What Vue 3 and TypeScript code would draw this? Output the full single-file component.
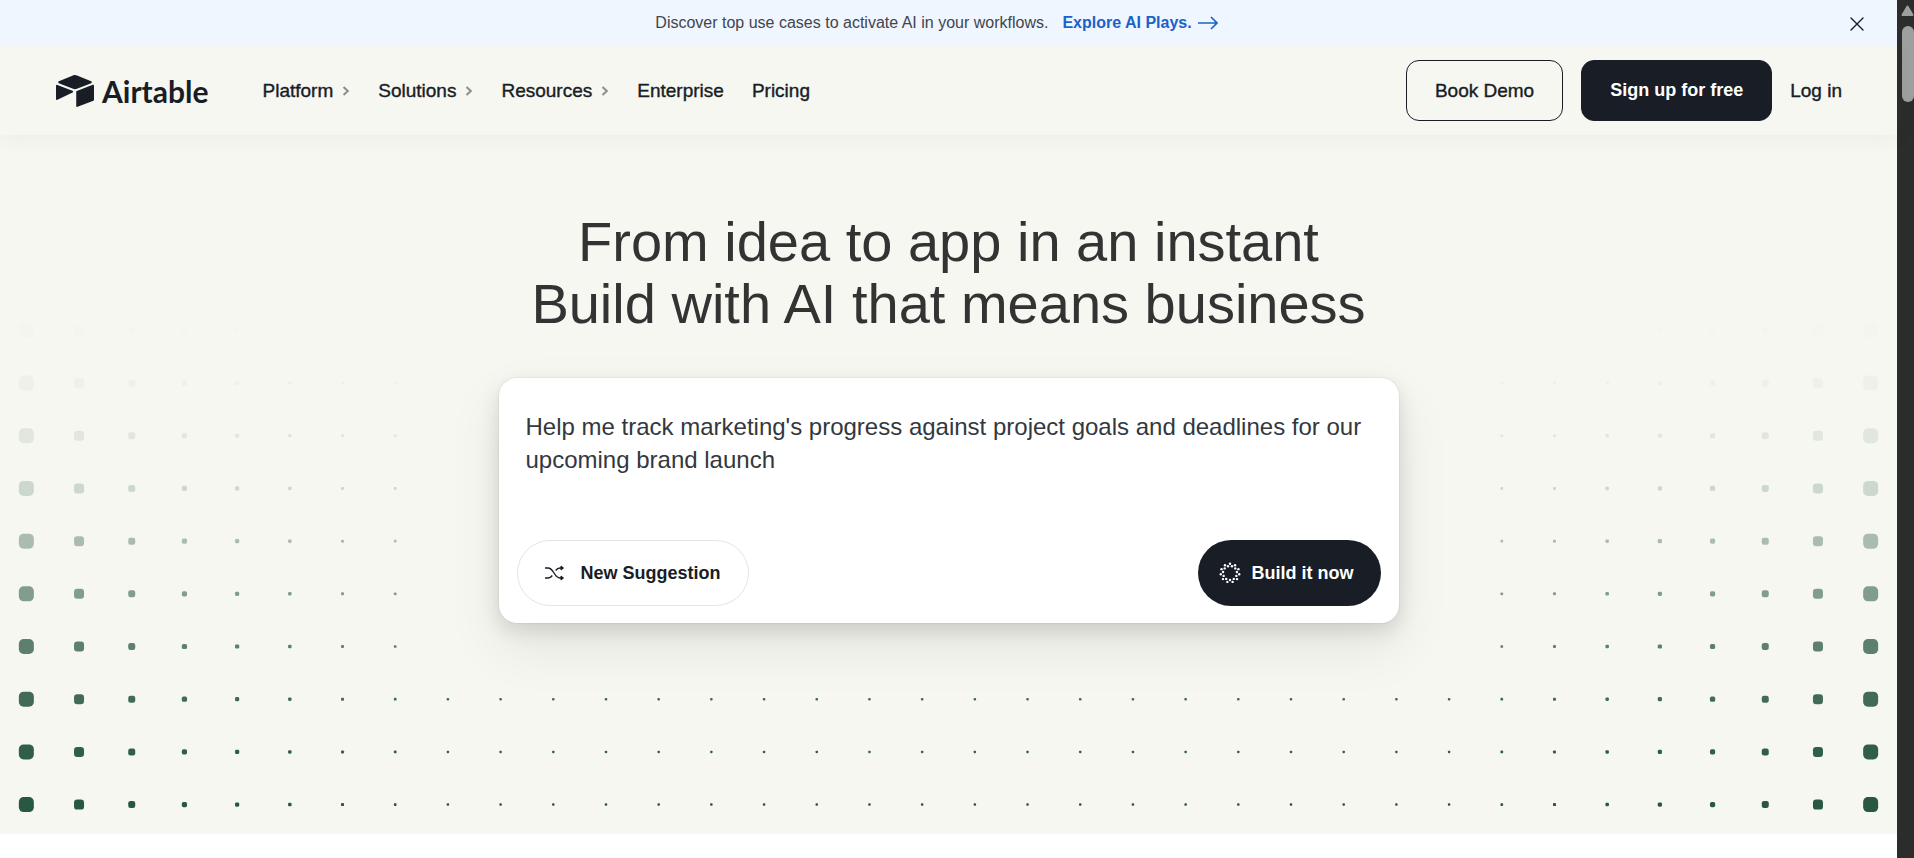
<script setup lang="ts">
import { ref } from 'vue'

interface Dot {
  key: string
  x: number
  y: number
  size: number
  opacity: number
}

const menus: string[] = ['Platform', 'Solutions', 'Resources']
const links: string[] = ['Enterprise', 'Pricing']

const prompt = ref(
  "Help me track marketing's progress against project goals and deadlines for our upcoming brand launch"
)
const bannerOpen = ref(true)

const COLUMNS = 36
const SIDE_COLUMNS = 8
const WIDTH = 1897
const STEP = WIDTH / COLUMNS
const sizes: number[] = [15, 10, 7, 5.2, 4.2, 3.5, 3, 2.7]
const opacities: number[] = [0.01, 0.04, 0.1, 0.2, 0.37, 0.57, 0.75, 0.88, 0.96, 1]

const dots: Dot[] = []
opacities.forEach((opacity, row) => {
  for (let col = 0; col < COLUMNS; col++) {
    const edge = Math.min(col, COLUMNS - 1 - col)
    if (row < 7 && edge >= SIDE_COLUMNS) continue
    const size = sizes[edge] ?? 2.5
    dots.push({
      key: `${row}-${col}`,
      x: (col + 0.5) * STEP - size / 2,
      y: (row + 0.5) * STEP - size / 2,
      size,
      opacity
    })
  }
})

const ringDots = Array.from({ length: 22 }, (_, i) => {
  const angle = (i * Math.PI) / 11
  const radius = i % 2 === 0 ? 9.3 : 7
  return { x: 11 + radius * Math.sin(angle), y: 11 - radius * Math.cos(angle) }
})
</script>

<template>
  <div class="window">
    <div class="page">
      <div v-if="bannerOpen" class="banner">
        <p class="banner-text">
          Discover top use cases to activate AI in your workflows.
          <a href="#plays" class="banner-link">
            Explore AI Plays.
            <svg width="20" height="14" viewBox="0 0 20 14" aria-hidden="true">
              <path d="M0 7H19M13 1L19 7L13 13" fill="none" stroke="currentColor" stroke-width="1.6" />
            </svg>
          </a>
        </p>
        <button class="close" type="button" aria-label="Dismiss" @click="bannerOpen = false">
          <svg width="14" height="14" viewBox="0 0 14 14" aria-hidden="true">
            <path d="M1 1L13 13M13 1L1 13" fill="none" stroke="currentColor" stroke-width="1.4" stroke-linecap="round" />
          </svg>
        </button>
      </div>

      <header class="header">
        <a href="#home" class="logo">
          <svg width="38" height="38" viewBox="0 0 24 24" fill="currentColor" aria-hidden="true">
            <path d="M11.992 1.966c-.434 0-.87.086-1.28.257L1.779 5.917c-.503.208-.49.908.012 1.116l8.982 3.558a3.266 3.266 0 0 0 2.454 0l8.982-3.558c.503-.196.503-.908.012-1.116l-8.957-3.694a3.255 3.255 0 0 0-1.272-.257zM23.4 8.056a.589.589 0 0 0-.222.045l-10.012 3.877a.612.612 0 0 0-.38.564v8.896a.6.6 0 0 0 .821.552L23.62 18.1a.583.583 0 0 0 .38-.551V8.653a.6.6 0 0 0-.6-.596zM.676 8.095a.644.644 0 0 0-.48.19C.086 8.396 0 8.53 0 8.69v8.355c0 .442.515.737.908.54l6.27-3.006.307-.147 2.969-1.436c.466-.22.43-.908-.061-1.092L.883 8.138a.57.57 0 0 0-.207-.044z" />
          </svg>
          <span class="wordmark">Airtable</span>
        </a>
        <nav class="nav">
          <button v-for="menu in menus" :key="menu" type="button" class="nav-item">
            {{ menu }}
            <svg width="8" height="10" viewBox="0 0 8 10" aria-hidden="true">
              <path d="M1.5 1L5.8 5L1.5 9" fill="none" stroke="#8f908e" stroke-width="2.1" />
            </svg>
          </button>
          <a v-for="link in links" :key="link" :href="'#' + link" class="nav-item">{{ link }}</a>
        </nav>
        <div class="actions">
          <a href="#demo" class="action outline">Book Demo</a>
          <a href="#signup" class="action solid">Sign up for free</a>
          <a href="#login" class="login">Log in</a>
        </div>
      </header>

      <main class="hero">
        <svg class="dots" viewBox="0 0 1897 527" aria-hidden="true">
          <rect
            v-for="dot in dots"
            :key="dot.key"
            :x="dot.x"
            :y="dot.y"
            :width="dot.size"
            :height="dot.size"
            :rx="dot.size * 0.32"
            :fill-opacity="dot.opacity"
            fill="#28583f"
          />
        </svg>
        <h1 class="title">From idea to app in an instant<br />Build with AI that means business</h1>
        <form class="card" @submit.prevent>
          <textarea v-model="prompt" class="prompt" rows="3" aria-label="Describe your app"></textarea>
          <div class="card-actions">
            <button type="button" class="pill suggest">
              <svg width="20" height="16" viewBox="0 0 20 16" fill="none" stroke="currentColor" stroke-width="1.4" aria-hidden="true">
                <path d="M0 3H3C9 3 9 13 15 13H18M0 13H3C5.100 13 6.300 11.900 7.300 10.500M10.700 5.500C11.700 4.100 12.900 3 15 3H18" />
                <path d="M16 1L18.500 3L16 5ZM16 11L18.500 13L16 15Z" fill="currentColor" stroke-linejoin="round" stroke-width="1" />
              </svg>
              New Suggestion
            </button>
            <button type="submit" class="pill build">
              <svg width="22" height="22" viewBox="0 0 22 22" fill="currentColor" aria-hidden="true">
                <circle v-for="(d, i) in ringDots" :key="i" :cx="d.x" :cy="d.y" r="1.2" />
              </svg>
              Build it now
            </button>
          </div>
        </form>
      </main>
    </div>

    <div class="scrollbar" aria-hidden="true">
      <svg width="13" height="11" viewBox="0 0 13 11">
        <path d="M6.500 1.500L11.500 10H1.500Z" fill="#9f9f9f" stroke="#9f9f9f" stroke-width="2" stroke-linejoin="round" />
      </svg>
      <div class="thumb"></div>
    </div>
  </div>
</template>

<style>
body {
  margin: 0;
}
</style>

<style scoped>
.window {
  display: flex;
  min-height: 100vh;
  background: #fff;
  color: #181d26;
  font-family: "Liberation Sans", Arial, Helvetica, sans-serif;
}

.page {
  flex: 1;
  min-width: 0;
}

a {
  color: inherit;
  text-decoration: none;
}

button {
  font: inherit;
  color: inherit;
  background: none;
  border: 0;
  padding: 0;
  cursor: pointer;
}

.banner {
  position: relative;
  z-index: 2;
  display: flex;
  align-items: center;
  height: 46px;
  padding: 0 32px 0 24px;
  background: #eff6ff;
}

.banner-text {
  flex: 1;
  margin: 0;
  display: flex;
  justify-content: center;
  gap: 14px;
  color: #41454d;
  font-size: 16px;
  line-height: 24px;
}

.banner-link {
  display: flex;
  align-items: center;
  gap: 6px;
  color: #1b61c9;
  font-weight: 700;
}

.close {
  display: flex;
  padding: 1px;
  margin-top: 2px;
}

.header {
  position: relative;
  z-index: 1;
  display: flex;
  align-items: center;
  height: 89px;
  padding: 0 55px 0 56px;
  background: #f6f7f1;
  box-shadow: 0 4px 20px rgba(24, 60, 38, 0.05);
}

.logo {
  display: flex;
  align-items: center;
  gap: 8px;
}

.wordmark {
  font-family: Lato, sans-serif;
  font-size: 30px;
  font-weight: 700;
  line-height: 36px;
}

.nav {
  display: flex;
  align-items: center;
  gap: 28px;
  margin-left: 54px;
  font-size: 19px;
  line-height: 24px;
  -webkit-text-stroke: 0.02em;
}

.nav-item {
  display: flex;
  align-items: center;
  gap: 9px;
}

.actions {
  display: flex;
  align-items: center;
  gap: 18px;
  margin-left: auto;
  font-size: 19px;
  line-height: 23px;
}

.action {
  box-sizing: border-box;
  padding: 18px 28px;
  border: 1px solid #181d26;
  border-radius: 13px;
}

.outline,
.login {
  -webkit-text-stroke: 0.02em;
}

.solid {
  background: #181d26;
  color: #fff;
  font-size: 18px;
  font-weight: 700;
}

.hero {
  position: relative;
  display: flex;
  flex-direction: column;
  align-items: center;
  gap: 43px;
  padding: 76px 24px 211px;
  background: #f6f7f1;
}

.dots {
  position: absolute;
  left: 0;
  bottom: 3px;
  width: 100%;
}

.title {
  position: relative;
  margin: 0;
  color: #333;
  font-size: 56px;
  font-weight: 400;
  line-height: 62px;
  text-align: center;
}

.card {
  position: relative;
  box-sizing: border-box;
  width: 100%;
  max-width: 900px;
  padding: 32px 18px 17px;
  border-radius: 18px;
  background: #fff;
  box-shadow:
    0 0 2px rgba(15, 20, 10, 0.14),
    0 8px 20px rgba(15, 20, 10, 0.12),
    0 24px 56px rgba(15, 20, 10, 0.08);
}

.prompt {
  display: block;
  box-sizing: border-box;
  width: 100%;
  height: 130px;
  padding: 0 9px;
  border: 0;
  outline: 0;
  resize: none;
  overflow: hidden;
  background: transparent;
  color: #333840;
  font: 24px/33px "Liberation Sans", Arial, sans-serif;
}

.card-actions {
  display: flex;
  justify-content: space-between;
}

.pill {
  display: flex;
  align-items: center;
  height: 66px;
  border-radius: 33px;
  font-size: 18px;
  font-weight: 700;
}

.suggest {
  gap: 16px;
  padding: 0 27px;
  border: 1px solid #e3e4e5;
}

.build {
  gap: 11px;
  padding: 0 27px 0 21px;
  background: #181d26;
  color: #fff;
}

.scrollbar {
  display: flex;
  flex-direction: column;
  align-items: flex-end;
  gap: 10px;
  width: 17px;
  padding-top: 5px;
  box-sizing: border-box;
  background: #2c2c2c;
}

.thumb {
  width: 12px;
  height: 76px;
  border-radius: 6px;
  background: #9f9f9f;
}
</style>
